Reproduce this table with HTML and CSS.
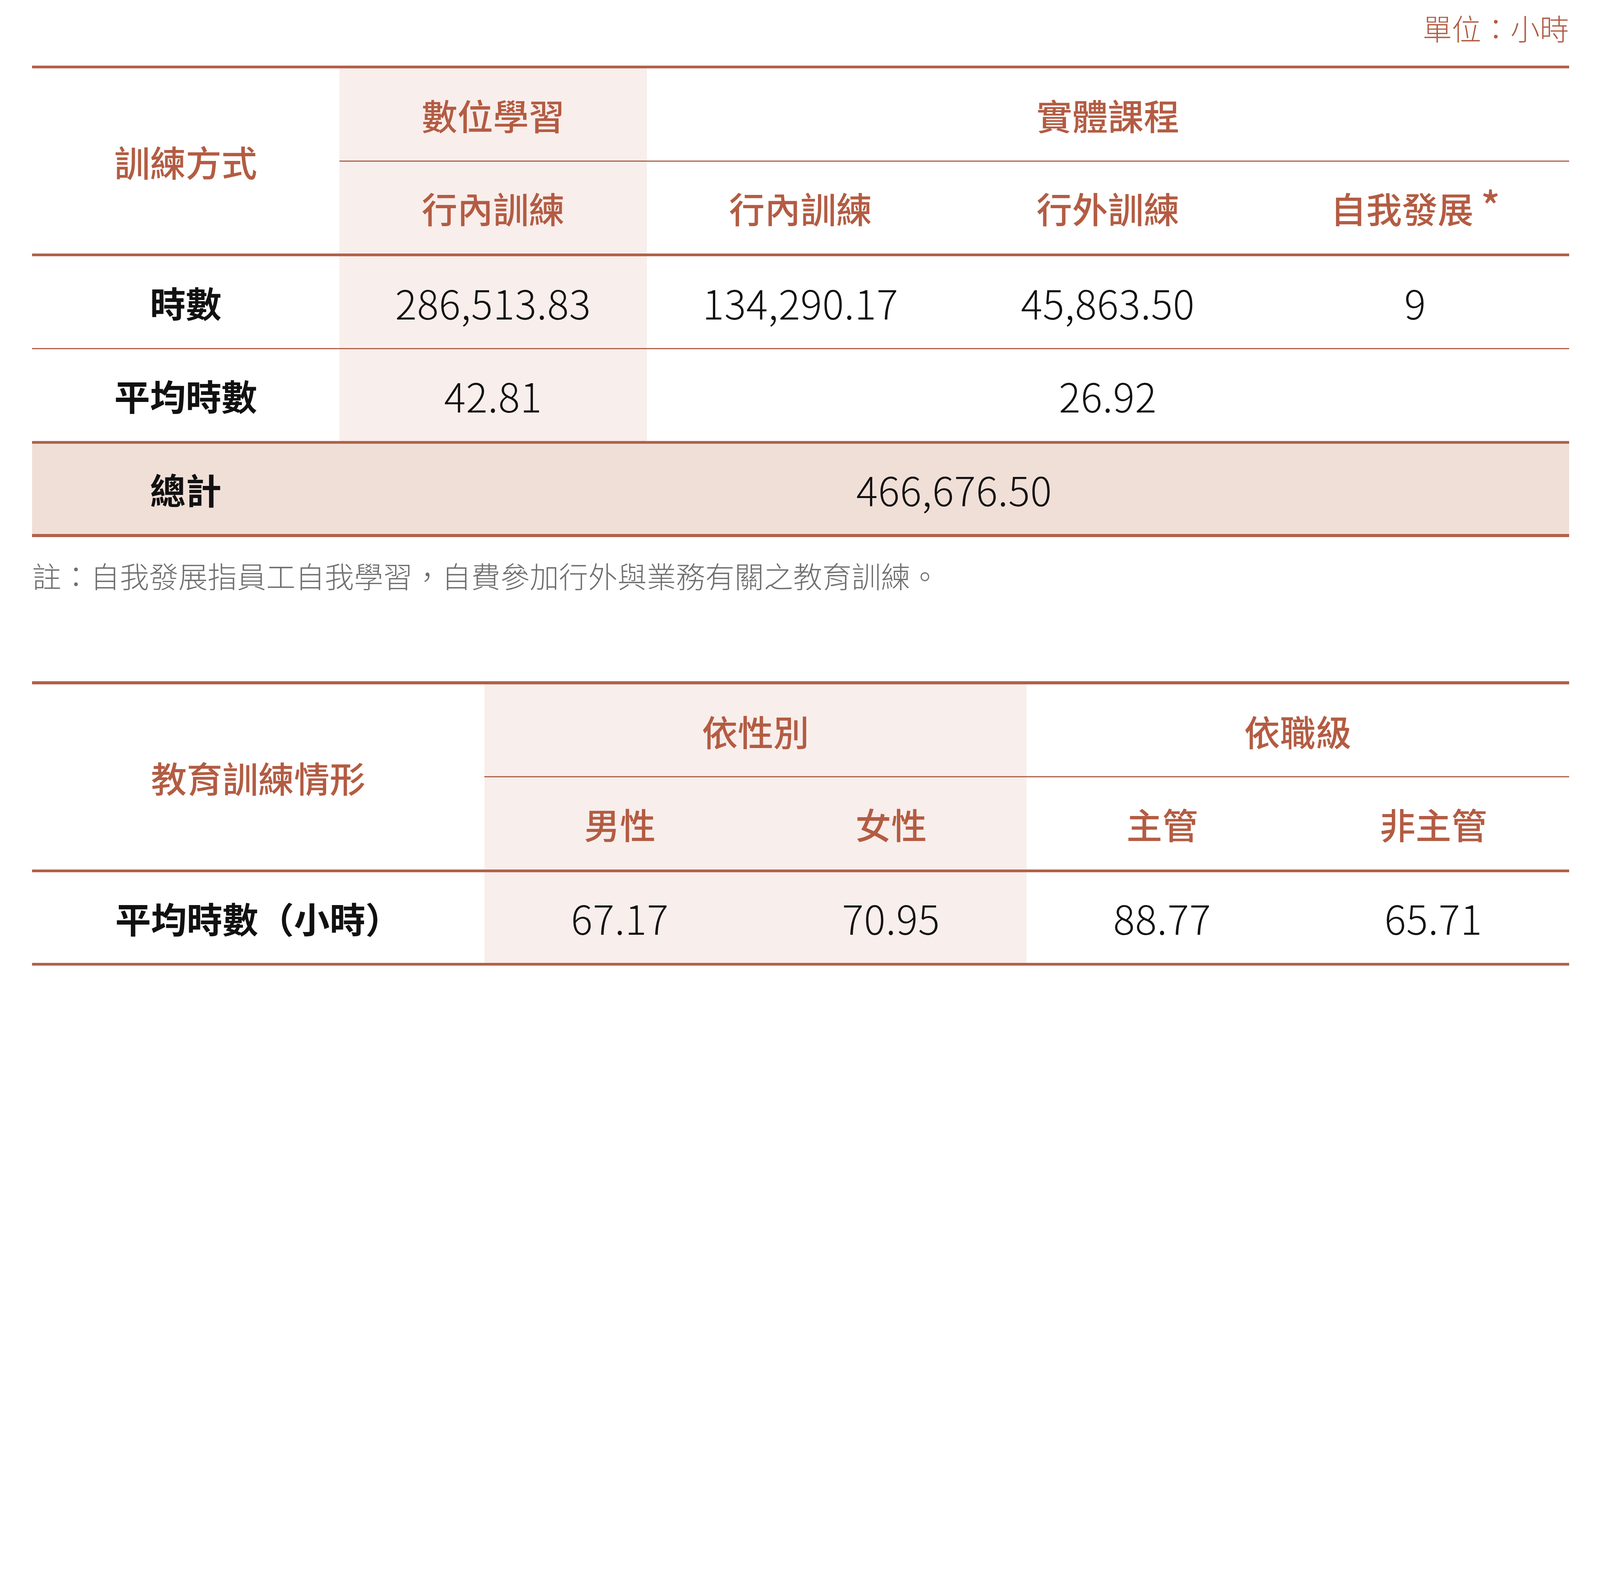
FILE: index.html
```html
<!DOCTYPE html>
<html lang="zh-Hant">
<head>
<meta charset="utf-8">
<title>教育訓練時數</title>
<link rel="stylesheet" href="styles.css">
</head>
<body>
<div class="page">
  <div class="unit">單位：小時</div>

  <div class="tbl tbl1">
    <div class="c h rspan2 bb-thick">訓練方式</div>
    <div class="c h shade bb-thin">數位學習</div>
    <div class="c h cspan3 bb-thin">實體課程</div>
    <div class="c h shade bb-thick">行內訓練</div>
    <div class="c h bb-thick">行內訓練</div>
    <div class="c h bb-thick">行外訓練</div>
    <div class="c h bb-thick">自我發展<span class="ast">*</span></div>

    <div class="c lab bb-thin">時數</div>
    <div class="c num shade bb-thin">286,513.83</div>
    <div class="c num bb-thin">134,290.17</div>
    <div class="c num bb-thin">45,863.50</div>
    <div class="c num bb-thin">9</div>

    <div class="c lab bb-thick">平均時數</div>
    <div class="c num shade bb-thick">42.81</div>
    <div class="c num cspan3 bb-thick">26.92</div>

    <div class="c lab total bb-thick">總計</div>
    <div class="c num total cspan4 bb-thick">466,676.50</div>
  </div>

  <p class="note">註：自我發展指員工自我學習，自費參加行外與業務有關之教育訓練。</p>

  <div class="tbl tbl2">
    <div class="c h rspan2 bb-thick">教育訓練情形</div>
    <div class="c h shade cspan2 bb-thin">依性別</div>
    <div class="c h cspan2 bb-thin">依職級</div>
    <div class="c h shade bb-thick">男性</div>
    <div class="c h shade bb-thick">女性</div>
    <div class="c h bb-thick">主管</div>
    <div class="c h bb-thick">非主管</div>

    <div class="c lab bb-thick">平均時數（小時）</div>
    <div class="c num shade bb-thick">67.17</div>
    <div class="c num shade bb-thick">70.95</div>
    <div class="c num bb-thick">88.77</div>
    <div class="c num bb-thick">65.71</div>
  </div>
</div>
</body>
</html>
```

FILE: styles.css
```css
:root {
  --u: calc(100vw / 6448);
  --line: #b1614a;
}

html, body {
  margin: 0;
  padding: 0;
  background: #ffffff;
  overflow: hidden;
}

body {
  font-family: "Noto Sans CJK TC", "Noto Sans CJK SC", "Noto Sans", sans-serif;
  color: #111111;
}

.page {
  width: calc(6194 * var(--u));
  padding: calc(42 * var(--u)) 0 0 calc(129 * var(--u));
}

.unit {
  height: calc(140 * var(--u));
  line-height: calc(140 * var(--u));
  font-size: calc(118 * var(--u));
  font-weight: 300;
  color: #b35c43;
  text-align: right;
  margin-bottom: calc(83 * var(--u));
}

.tbl {
  display: grid;
  border-top: calc(12 * var(--u)) solid var(--line);
}

.tbl1 {
  grid-template-columns: repeat(5, 1fr);
  grid-template-rows:
    calc(375 * var(--u))
    calc(381 * var(--u))
    calc(375 * var(--u))
    calc(381 * var(--u))
    calc(377 * var(--u));
}

.tbl2 {
  border-top-width: calc(13 * var(--u));
  grid-template-columns: calc(1823 * var(--u)) repeat(4, 1fr);
  grid-template-rows:
    calc(376 * var(--u))
    calc(381 * var(--u))
    calc(377 * var(--u));
}

.c {
  box-sizing: border-box;
  display: flex;
  align-items: center;
  justify-content: center;
  white-space: nowrap;
}

.bb-thin {
  border-bottom: calc(6 * var(--u)) solid var(--line);
}

.bb-thick {
  border-bottom: calc(12 * var(--u)) solid var(--line);
}

.rspan2 {
  grid-row: span 2;
}

.cspan2 {
  grid-column: span 2;
}

.cspan3 {
  grid-column: span 3;
}

.cspan4 {
  grid-column: span 4;
}

.shade {
  background: #f8eeeb;
}

.total {
  background: #f0dfd7;
  border-bottom-width: calc(13 * var(--u));
}

.h {
  font-size: calc(144 * var(--u));
  font-weight: 500;
  color: #b35c43;
}

.lab {
  font-size: calc(144 * var(--u));
  font-weight: 700;
  color: #111111;
}

.num {
  font-size: calc(162 * var(--u));
  letter-spacing: calc(1.5 * var(--u));
  font-weight: 300;
  color: #111111;
}

.ast {
  font-size: calc(160 * var(--u));
  font-weight: 500;
  align-self: flex-start;
  margin-left: calc(30 * var(--u));
  line-height: 1;
  margin-top: calc(90 * var(--u));
}

.note {
  margin: calc(84 * var(--u)) 0 calc(356 * var(--u)) 0;
  height: calc(140 * var(--u));
  line-height: calc(140 * var(--u));
  font-size: calc(118 * var(--u));
  font-weight: 300;
  color: #6f6f6f;
}
```
